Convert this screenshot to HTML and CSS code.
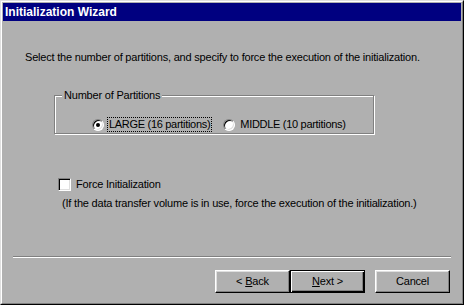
FILE: index.html
```html
<!DOCTYPE html>
<html>
<head>
<meta charset="utf-8">
<link rel="stylesheet" href="styles.css">
</head>
<body>
<div class="window">
  <div class="frame">
    <div class="titlebar">Initialization Wizard</div>
    <div class="content">
      <p class="intro">Select the number of partitions, and specify to force the execution of the initialization.</p>
      <div class="group">
        <span class="legend">Number of Partitions</span>
        <div class="radios">
          <span class="radio checked"></span>
          <span class="rlabel focus">LARGE (16 partitions)</span>
          <span class="radio second"></span>
          <span class="rlabel">MIDDLE (10 partitions)</span>
        </div>
      </div>
      <div class="checkrow">
        <span class="checkbox"></span>
        <span class="clabel">Force Initialization</span>
      </div>
      <p class="note">(If the data transfer volume is in use, force the execution of the initialization.)</p>
      <div class="separator"></div>
      <div class="buttons">
        <button class="btn"><span>&lt; <u>B</u>ack</span></button>
        <button class="btn default"><span><u>N</u>ext &gt;</span></button>
        <button class="btn cancel"><span>Cancel</span></button>
      </div>
    </div>
  </div>
</div>
</body>
</html>
```

FILE: styles.css
```css
* { box-sizing: border-box; }
html, body { margin: 0; padding: 0; background: #b0b0b0; }
body {
  font-family: "Liberation Sans", Arial, sans-serif;
  font-size: 11px;
  letter-spacing: -0.2px;
  color: #000;
}
.window {
  width: 464px;
  height: 305px;
  border: 1px solid;
  border-color: #dfdfdf #000 #000 #dfdfdf;
  background: #b0b0b0;
}
.frame {
  height: 100%;
  border: 1px solid;
  border-color: #fff #808080 #808080 #fff;
  padding: 1px;
  display: flex;
  flex-direction: column;
}
.titlebar {
  height: 18px;
  flex: none;
  background: #000080;
  color: #fff;
  font-weight: bold;
  font-size: 12px;
  letter-spacing: 0;
  padding-left: 2px;
  display: flex;
  align-items: center;
}
.content {
  display: flex;
  flex-direction: column;
  align-items: flex-start;
}
.intro {
  margin: 30px 0 0 22px;
  line-height: 13px;
  white-space: nowrap;
}
.group {
  position: relative;
  margin: 31px 0 0 51px;
  width: 320px;
  height: 39px;
  border: 1px solid #808080;
  box-shadow: 1px 1px 0 #fff, inset 1px 1px 0 #fff;
}
.legend {
  position: absolute;
  left: 7px;
  top: -7px;
  padding: 0 2px;
  line-height: 13px;
  background: #b0b0b0;
  white-space: nowrap;
}
.radios {
  display: flex;
  align-items: center;
  margin: 21px 0 0 37px;
  height: 15px;
  letter-spacing: -0.3px;
}
.radio {
  width: 12px;
  height: 12px;
  border-radius: 50%;
  border: 1px solid;
  border-color: #808080 #fff #fff #808080;
  background: #fff;
  box-shadow: inset 1px 1px 0 #000, inset -1px -1px 0 #dfdfdf;
  display: flex;
  align-items: center;
  justify-content: center;
  flex: none;
}
.radio.checked::after {
  content: "";
  width: 4px;
  height: 4px;
  border-radius: 50%;
  background: #000;
}
.radio.second { margin-left: 11px; }
.rlabel {
  margin-left: 3px;
  height: 15px;
  line-height: 13px;
  padding: 0 1px;
  border: 1px solid transparent;
  white-space: nowrap;
}
.rlabel.focus { border: 1px dotted #000; }
.checkrow {
  display: flex;
  align-items: center;
  margin: 44px 0 0 55px;
  height: 13px;
}
.checkbox {
  width: 13px;
  height: 13px;
  border: 1px solid;
  border-color: #808080 #fff #fff #808080;
  background: #fff;
  box-shadow: inset 1px 1px 0 #000, inset -1px -1px 0 #dfdfdf;
  flex: none;
}
.clabel {
  margin-left: 5px;
  line-height: 13px;
  white-space: nowrap;
}
.note {
  margin: 6px 0 0 59px;
  line-height: 13px;
  white-space: nowrap;
}
.separator {
  margin: 46px 0 0 10px;
  width: 438px;
  height: 2px;
  border-top: 1px solid #808080;
  border-bottom: 1px solid #fff;
}
.buttons {
  display: flex;
  margin: 12px 0 0 212px;
}
.btn {
  width: 75px;
  height: 23px;
  margin: 0;
  padding: 0;
  font: inherit;
  letter-spacing: inherit;
  color: #000;
  background: #b0b0b0;
  border: 1px solid;
  border-color: #fff #000 #000 #fff;
  box-shadow: inset -1px -1px 0 #808080, inset 1px 1px 0 #dfdfdf;
  display: flex;
  align-items: center;
  justify-content: center;
  line-height: 13px;
  white-space: pre;
}
.btn.default {
  border: 1px solid #000;
  box-shadow: inset 1px 1px 0 #fff, inset -1px -1px 0 #000, inset -2px -2px 0 #808080;
}
.btn.cancel { margin-left: 10px; }
u { text-underline-offset: 1px; }
```
